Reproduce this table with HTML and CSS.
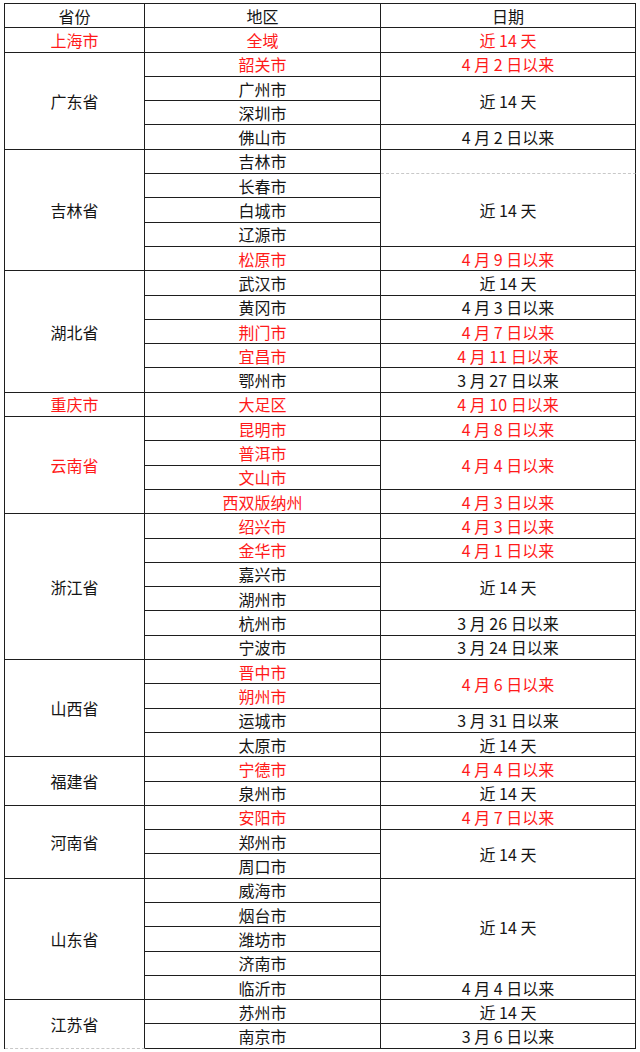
FILE: index.html
```html
<!DOCTYPE html>
<html lang="zh-CN">
<head>
<meta charset="utf-8">
<title>地区</title>
<link rel="stylesheet" href="styles.css">
</head>
<body>
<div class="wrap">
<table class="tbl">
  <colgroup><col class="c1"><col class="c2"><col class="c3"></colgroup>
  <tr><td>省份</td><td>地区</td><td>日期</td></tr>
  <tr class="r"><td>上海市</td><td>全域</td><td>近 14 天</td></tr>

  <tr><td rowspan="4">广东省</td><td class="r">韶关市</td><td class="r">4 月 2 日以来</td></tr>
  <tr><td>广州市</td><td rowspan="2">近 14 天</td></tr>
  <tr><td>深圳市</td></tr>
  <tr><td>佛山市</td><td>4 月 2 日以来</td></tr>

  <tr><td rowspan="5">吉林省</td><td>吉林市</td><td class="dash"></td></tr>
  <tr><td>长春市</td><td rowspan="3">近 14 天</td></tr>
  <tr><td>白城市</td></tr>
  <tr><td>辽源市</td></tr>
  <tr><td class="r">松原市</td><td class="r">4 月 9 日以来</td></tr>

  <tr><td rowspan="5">湖北省</td><td>武汉市</td><td>近 14 天</td></tr>
  <tr><td>黄冈市</td><td>4 月 3 日以来</td></tr>
  <tr class="r"><td>荆门市</td><td>4 月 7 日以来</td></tr>
  <tr class="r"><td>宜昌市</td><td>4 月 11 日以来</td></tr>
  <tr><td>鄂州市</td><td>3 月 27 日以来</td></tr>

  <tr class="r"><td>重庆市</td><td>大足区</td><td>4 月 10 日以来</td></tr>

  <tr class="r"><td rowspan="4">云南省</td><td>昆明市</td><td>4 月 8 日以来</td></tr>
  <tr class="r"><td>普洱市</td><td rowspan="2">4 月 4 日以来</td></tr>
  <tr class="r"><td>文山市</td></tr>
  <tr class="r"><td>西双版纳州</td><td>4 月 3 日以来</td></tr>

  <tr><td rowspan="6">浙江省</td><td class="r">绍兴市</td><td class="r">4 月 3 日以来</td></tr>
  <tr class="r"><td>金华市</td><td>4 月 1 日以来</td></tr>
  <tr><td>嘉兴市</td><td rowspan="2">近 14 天</td></tr>
  <tr><td>湖州市</td></tr>
  <tr><td>杭州市</td><td>3 月 26 日以来</td></tr>
  <tr><td>宁波市</td><td>3 月 24 日以来</td></tr>

  <tr><td rowspan="4">山西省</td><td class="r">晋中市</td><td class="r" rowspan="2">4 月 6 日以来</td></tr>
  <tr class="r"><td>朔州市</td></tr>
  <tr><td>运城市</td><td>3 月 31 日以来</td></tr>
  <tr><td>太原市</td><td>近 14 天</td></tr>

  <tr><td rowspan="2">福建省</td><td class="r">宁德市</td><td class="r">4 月 4 日以来</td></tr>
  <tr><td>泉州市</td><td>近 14 天</td></tr>

  <tr><td rowspan="3">河南省</td><td class="r">安阳市</td><td class="r">4 月 7 日以来</td></tr>
  <tr><td>郑州市</td><td rowspan="2">近 14 天</td></tr>
  <tr><td>周口市</td></tr>

  <tr><td rowspan="5">山东省</td><td>威海市</td><td rowspan="4">近 14 天</td></tr>
  <tr><td>烟台市</td></tr>
  <tr><td>潍坊市</td></tr>
  <tr><td>济南市</td></tr>
  <tr><td>临沂市</td><td>4 月 4 日以来</td></tr>

  <tr><td rowspan="2" class="last">江苏省</td><td>苏州市</td><td>近 14 天</td></tr>
  <tr><td>南京市</td><td>3 月 6 日以来</td></tr>
</table>
</div>
</body>
</html>
```

FILE: styles.css
```css
html, body {
  margin: 0;
  padding: 0;
  background: #ffffff;
}
.wrap {
  padding: 3px 0 0 4px;
}
.tbl {
  border-collapse: separate;
  border-spacing: 0;
  table-layout: fixed;
  width: 631px;
  border-top: 1px solid #1e1e1e;
  border-left: 1px solid #1e1e1e;
  font-family: "Noto Sans CJK SC", "Noto Sans", sans-serif;
  font-size: 16px;
  color: #151515;
}
.c1 { width: 140px; }
.c2 { width: 236px; }
.c3 { width: 255px; }
.tbl tr {
  height: 24.3px;
}
.tbl td {
  border-right: 1px solid #1e1e1e;
  border-bottom: 1px solid #1e1e1e;
  padding: 0;
  text-align: center;
  vertical-align: middle;
  line-height: 18px;
  white-space: nowrap;
}
.tbl .r, .tbl .r td {
  color: #ff1a1a;
}
.tbl td.dash {
  border-bottom: 1px dashed #c8c8c8;
}
.tbl td.last {
  border-bottom: 1px dashed #c8c8c8;
}
```
